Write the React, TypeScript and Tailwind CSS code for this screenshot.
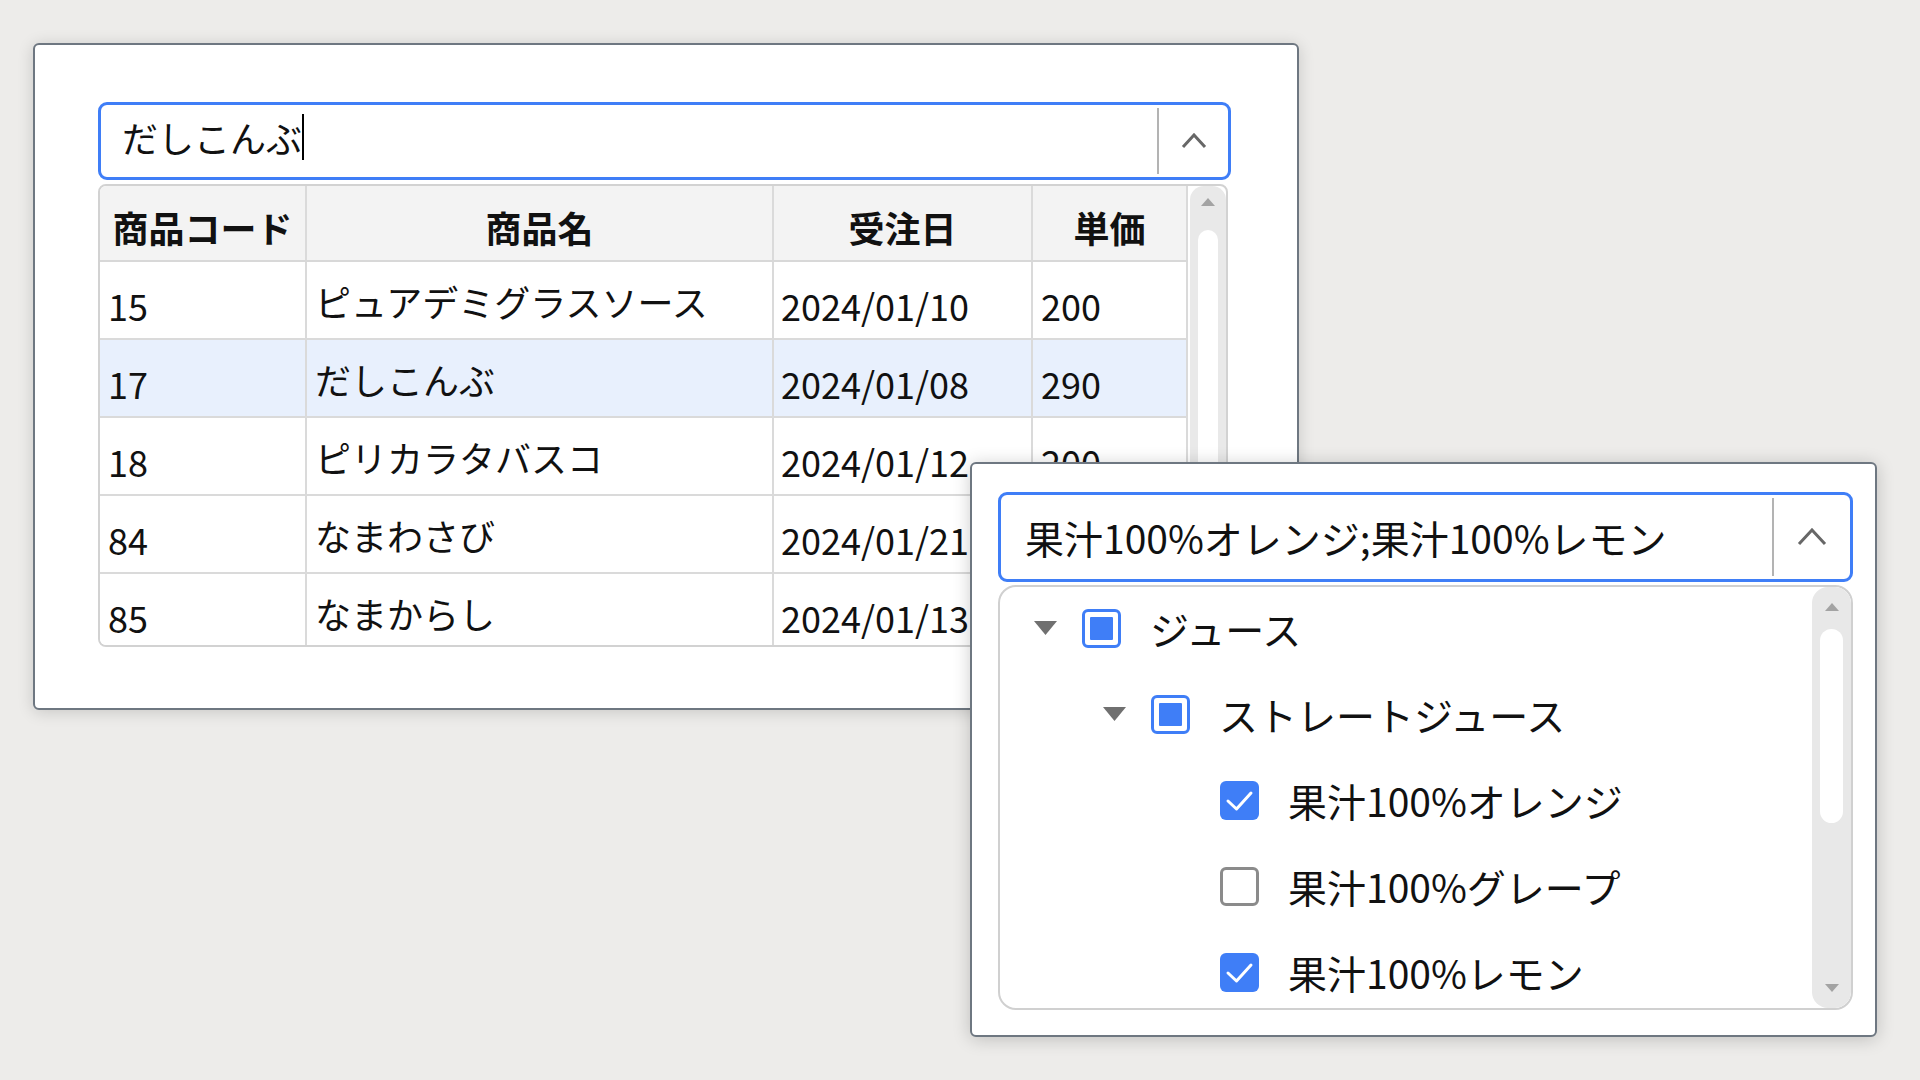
import React from 'react';

const rows = [
  { code: '15', name: 'ピュアデミグラスソース', date: '2024/01/10', price: '200' },
  { code: '17', name: 'だしこんぶ', date: '2024/01/08', price: '290', selected: true },
  { code: '18', name: 'ピリカラタバスコ', date: '2024/01/12', price: '200' },
  { code: '84', name: 'なまわさび', date: '2024/01/21', price: '250' },
  { code: '85', name: 'なまからし', date: '2024/01/13', price: '230' },
];

const tree = [
  { label: 'ジュース', level: 0, caret: true, state: 'mixed' },
  { label: 'ストレートジュース', level: 1, caret: true, state: 'mixed' },
  { label: '果汁100%オレンジ', level: 2, caret: false, state: 'on' },
  { label: '果汁100%グレープ', level: 2, caret: false, state: 'off' },
  { label: '果汁100%レモン', level: 2, caret: false, state: 'on' },
];

function ChevronUp({ w, h }: { w: number; h: number }) {
  return (
    <svg width={w} height={h} viewBox={`0 0 ${w} ${h}`} fill="none">
      <polyline points={`2,${h - 2} ${w / 2},2 ${w - 2},${h - 2}`} stroke="#676767" strokeWidth="3" />
    </svg>
  );
}

function Arrow({ down }: { down?: boolean }) {
  return (
    <svg width="14" height="8" viewBox="0 0 14 8">
      <path d={down ? 'M0 0H14L7 8Z' : 'M0 8H14L7 0Z'} fill="#a3a3a3" />
    </svg>
  );
}

function Check({ state }: { state: string }) {
  if (state === 'on') {
    return (
      <div className="w-[39px] h-[39px] rounded-[6px] bg-[#3f7ef7] flex items-center justify-center">
        <svg width="39" height="39" viewBox="0 0 39 39" fill="none">
          <polyline points="8,20 16.5,28 31,12" stroke="white" strokeWidth="3" strokeLinecap="round" strokeLinejoin="round" />
        </svg>
      </div>
    );
  }
  if (state === 'mixed') {
    return (
      <div className="w-[39px] h-[39px] rounded-[6px] border-[3px] border-[#3f7ef7] bg-white flex items-center justify-center">
        <div className="w-[23px] h-[23px] bg-[#3f7ef7] rounded-[1px]" />
      </div>
    );
  }
  return <div className="w-[39px] h-[39px] rounded-[6px] border-[3px] border-[#8b8b8b] bg-white" />;
}

export default function App() {
  return (
    <div className="relative w-[1920px] h-[1080px] overflow-hidden bg-[#edecea] text-[#111] font-['Noto_Sans_CJK_JP','Noto_Sans',sans-serif]">
      {/* product grid combo */}
      <div className="absolute left-[33px] top-[43px] w-[1266px] h-[667px] bg-white border-2 border-[#6e7781] rounded-[6px] shadow-[0_2px_16px_rgba(0,0,0,0.16)] pl-[63px] pt-[57px]">
        <div className="w-[1133px] h-[78px] border-[3px] border-[#3f7ef7] rounded-[9px] flex">
          <div className="flex-1 flex items-center pl-[21px] pb-[8px] text-[36px] leading-none">
            <span>だしこんぶ</span>
            <span className="w-[2px] h-[46px] bg-black" />
          </div>
          <div className="w-[2px] bg-[#b3b3b3] my-[3px]" />
          <div className="w-[69px] flex items-center justify-center">
            <ChevronUp w={26} h={16} />
          </div>
        </div>

        <div className="mt-[4px] w-[1130px] h-[463px] border-2 border-[#d2d2d2] rounded-[8px] overflow-hidden flex">
          <div className="w-[1088px] flex flex-col">
            <div className="grid grid-cols-[207px_467px_259px_155px] h-[76px] shrink-0 bg-[#f3f3f3] border-b-2 border-[#d8d8d8] text-[36px] font-bold leading-none">
              {['商品コード', '商品名', '受注日', '単価'].map((h) => (
                <div key={h} className="flex items-center justify-center pt-[8px] border-r-2 border-[#dadada]">
                  {h}
                </div>
              ))}
            </div>
            {rows.map((r) => (
              <div
                key={r.code}
                className={`grid grid-cols-[207px_467px_259px_155px] h-[78px] shrink-0 border-b-2 border-[#dadada] text-[36px] leading-none ${r.selected ? 'bg-[#e8f0fd]' : 'bg-white'}`}
              >
                <div className="flex items-center pl-[8px] pt-[10px] border-r-2 border-[#dadada]">{r.code}</div>
                <div className="flex items-center pl-[8px] pt-[2px] border-r-2 border-[#dadada]">{r.name}</div>
                <div className="flex items-center pl-[7px] pt-[10px] border-r-2 border-[#dadada]">{r.date}</div>
                <div className="flex items-center pl-[8px] pt-[10px] border-r-2 border-[#dadada]">{r.price}</div>
              </div>
            ))}
          </div>
          <div className="w-[38px] bg-[#e9e9e9] rounded-t-[14px] ml-[2px] flex flex-col items-center">
            <div className="mt-[12px]">
              <Arrow />
            </div>
            <div className="mt-[24px] w-[20px] h-[360px] bg-white rounded-full" />
          </div>
        </div>
      </div>

      {/* tree combo */}
      <div className="absolute left-[970px] top-[462px] w-[907px] h-[575px] bg-white border-2 border-[#6e7781] rounded-[6px] shadow-[0_2px_18px_rgba(0,0,0,0.2)] pl-[26px] pt-[28px]">
        <div className="w-[855px] h-[90px] border-[3px] border-[#3f7ef7] rounded-[9px] flex">
          <div className="flex-1 flex items-center pl-[24px] text-[39px] leading-none">
            果汁100%オレンジ;果汁100%レモン
          </div>
          <div className="w-[2px] bg-[#b3b3b3] my-[3px]" />
          <div className="w-[76px] flex items-center justify-center">
            <ChevronUp w={30} h={18} />
          </div>
        </div>

        <div className="mt-[3px] w-[855px] h-[425px] border-2 border-[#d0d0d0] rounded-[18px] overflow-hidden flex">
          <div className="flex-1 flex flex-col -mt-[2px]">
            {tree.map((t) => (
              <div
                key={t.label}
                className={`h-[86px] shrink-0 flex items-center text-[39px] leading-none ${
                  t.level === 0 ? 'pl-[34px]' : t.level === 1 ? 'pl-[103px]' : 'pl-[172px]'
                }`}
              >
                <div className="w-[23px] h-[14px] flex">
                  {t.caret && (
                    <svg width="23" height="14" viewBox="0 0 23 14">
                      <path d="M0 0H23L11.5 14Z" fill="#707070" />
                    </svg>
                  )}
                </div>
                <div className="ml-[25px]">
                  <Check state={t.state} />
                </div>
                <span className="ml-[29px]">{t.label}</span>
              </div>
            ))}
          </div>
          <div className="w-[39px] bg-[#e8e8e8] rounded-[16px] flex flex-col items-center">
            <div className="mt-[16px]">
              <Arrow />
            </div>
            <div className="mt-[18px] w-[23px] h-[194px] bg-white rounded-full" />
            <div className="mt-auto mb-[16px]">
              <Arrow down />
            </div>
          </div>
        </div>
      </div>
    </div>
  );
}
